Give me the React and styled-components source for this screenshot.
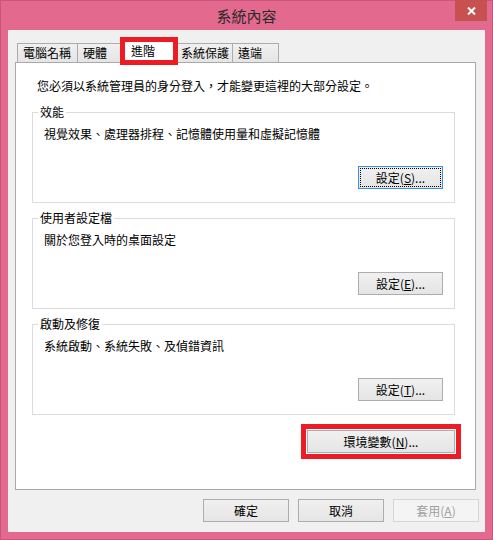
import React from 'react'
import styled, { createGlobalStyle } from 'styled-components'

const GlobalStyle = createGlobalStyle`
  html, body {
    margin: 0;
    padding: 0;
    background: #ffffff;
  }
  body {
    font-family: "Noto Sans CJK TC", "Noto Sans", sans-serif;
    font-size: 12px;
    color: #000;
  }
`

const tabs = [
  { label: '電腦名稱', w: 61, pad: 5 },
  { label: '硬體', w: 44, pad: 5 },
  { label: '進階', w: 58, pad: 10, active: true },
  { label: '系統保護', w: 56, pad: 3 },
  { label: '遠端', w: 47, pad: 5 },
]

const groups = [
  { title: '效能', text: '視覺效果、處理器排程、記憶體使用量和虛擬記憶體', key: 'S', focused: true },
  { title: '使用者設定檔', text: '關於您登入時的桌面設定', key: 'E' },
  { title: '啟動及修復', text: '系統啟動、系統失敗、及偵錯資訊', key: 'T' },
]

function App() {
  return (
    <>
      <GlobalStyle />
      <Window>
        <TitleBar>
          <span />
          <Title>系統內容</Title>
          <CloseButton>
            <svg width="9" height="8" viewBox="0 0 9 8">
              <path d="M1 0.5 L8 7.5 M8 0.5 L1 7.5" stroke="#fff" strokeWidth="2" />
            </svg>
          </CloseButton>
        </TitleBar>

        <Client>
          <TabStrip>
            {tabs.map((t) => (
              <Tab key={t.label} $w={t.w} $pad={t.pad} $active={t.active}>
                {t.label}
              </Tab>
            ))}
          </TabStrip>

          <Panel>
            <Intro>您必須以系統管理員的身分登入，才能變更這裡的大部分設定。</Intro>

            {groups.map((g) => (
              <Group key={g.title}>
                <Legend>{g.title}</Legend>
                <GroupText>{g.text}</GroupText>
                <Button $w={85} $focused={g.focused}>
                  設定(<u>{g.key}</u>)...
                </Button>
              </Group>
            ))}

            <EnvButton $w={148}>
              環境變數(<u>N</u>)...
            </EnvButton>
          </Panel>

          <ButtonRow>
            <Button $w={86}>確定</Button>
            <Button $w={86}>取消</Button>
            <Button $w={86} $disabled>
              套用(<u>A</u>)
            </Button>
          </ButtonRow>
        </Client>
      </Window>
    </>
  )
}

export default App

const Window = styled.div`
  box-sizing: border-box;
  width: 493px;
  height: 540px;
  display: flex;
  flex-direction: column;
  background: #e4698f;
  border: 1px solid #c9557f;
`

const TitleBar = styled.div`
  height: 29px;
  display: grid;
  grid-template-columns: 1fr auto 1fr;
  align-items: center;
`

const Title = styled.div`
  font-size: 15px;
  line-height: 18px;
  color: #2b2b2b;
  margin-top: 0px;
`

const CloseButton = styled.div`
  justify-self: end;
  align-self: start;
  margin-top: -1px;
  margin-right: 5px;
  width: 32px;
  height: 21px;
  background: #c75050;
  display: flex;
  align-items: center;
  justify-content: center;
`

const Client = styled.div`
  flex: 1;
  margin: 0 7px 7px 7px;
  background: #f0f0f0;
  display: flex;
  flex-direction: column;
  padding: 9px 6px 10px 7px;
  min-height: 0;
`

const TabStrip = styled.div`
  display: flex;
  align-items: flex-end;
  padding-left: 2px;
  height: 23px;
  position: relative;
  z-index: 2;
`

const Tab = styled.div`
  box-sizing: border-box;
  position: relative;
  width: ${(p) => p.$w}px;
  height: ${(p) => (p.$active ? 23 : 19)}px;
  margin-left: -1px;
  margin-bottom: ${(p) => (p.$active ? -1 : 0)}px;
  padding-left: ${(p) => p.$pad}px;
  padding-top: ${(p) => (p.$active ? 2 : 1)}px;
  line-height: 16px;
  font-size: 12px;
  white-space: nowrap;
  border: 1px solid #acacac;
  border-bottom: none;
  background: ${(p) => (p.$active ? '#ffffff' : 'linear-gradient(#f0f0f0, #e5e5e5)')};
  z-index: ${(p) => (p.$active ? 3 : 1)};

  &:first-child {
    margin-left: 0;
  }

  ${(p) =>
    p.$active &&
    `
    &::after {
      content: '';
      position: absolute;
      top: -4px;
      bottom: -2px;
      left: -1px;
      right: -1px;
      border: 5px solid #ed1c24;
    }
  `}
`

const Panel = styled.div`
  flex: 1;
  margin-right: 3px;
  background: #ffffff;
  border: 1px solid #a9a9a9;
  display: flex;
  flex-direction: column;
  padding: 15px 20px 0 16px;
  min-height: 0;
`

const Intro = styled.div`
  margin-left: 5px;
  line-height: 16px;
  white-space: nowrap;
`

const Group = styled.fieldset`
  margin: 11px 0 0 0;
  padding: 0 11px 13px 5px;
  border: 1px solid #dcdcdc;
  min-width: 0;
  display: flex;
  flex-direction: column;

  & + & {
    margin-top: 8px;
  }
`

const Legend = styled.legend`
  padding: 0 2px;
  font-size: 12px;
  line-height: 14px;
`

const GroupText = styled.div`
  margin: 7px 0 0 6px;
  line-height: 16px;
  white-space: nowrap;
`

const Button = styled.div`
  box-sizing: border-box;
  width: ${(p) => p.$w}px;
  height: 23px;
  display: flex;
  align-items: center;
  justify-content: center;
  font-size: 12px;
  line-height: 16px;
  white-space: nowrap;
  border: 1px solid ${(p) => (p.$focused ? '#3c8fe6' : p.$disabled ? '#d5d5d5' : '#adadad')};
  background: ${(p) => (p.$disabled ? '#f4f4f4' : 'linear-gradient(#f0f0f0, #e5e5e5)')};
  color: ${(p) => (p.$disabled ? '#a0a0a0' : '#000')};

  ${Group} & {
    align-self: flex-end;
    margin-top: 24px;
  }

  ${(p) =>
    p.$focused &&
    `
    outline: 1px dotted #000;
    outline-offset: -3px;
  `}

  u {
    text-underline-offset: 1px;
  }
`

const EnvButton = styled(Button)`
  align-self: flex-end;
  margin-top: 15px;
  outline: 5px solid #ed1c24;
  outline-offset: 1px;
`

const ButtonRow = styled.div`
  display: flex;
  justify-content: flex-end;
  gap: 9px;
  margin-top: 9px;
`
